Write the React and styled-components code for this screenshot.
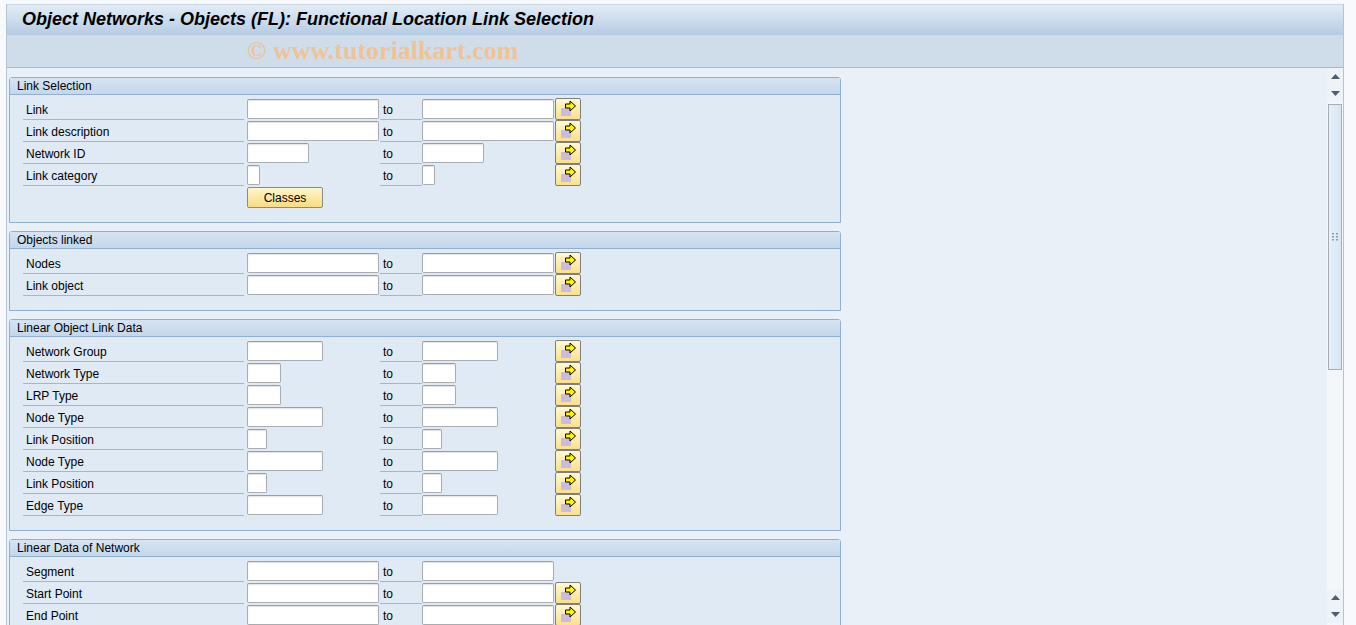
import React from 'react';
import styled, { createGlobalStyle } from 'styled-components';

const GlobalStyle = createGlobalStyle`
  html, body {
    margin: 0;
    padding: 0;
    background: #f7f9fc;
    font-family: "Liberation Sans", Arial, sans-serif;
    font-size: 12px;
    color: #000;
  }
`;

const Page = styled.div`
  width: 1356px;
  height: 625px;
  overflow: hidden;
  padding: 4px 12px 0 6px;
  box-sizing: border-box;
`;

const Frame = styled.div`
  display: flex;
  flex-direction: column;
  height: 100%;
  border-left: 1px solid #b4c4d4;
  border-right: 1px solid #b4c4d4;
`;

const TitleBar = styled.div`
  height: 31px;
  display: flex;
  align-items: center;
  padding: 0 0 2px 15px;
  border-top: 1px solid #c9d6e3;
  background: linear-gradient(#e3ecf6, #b6cce2);
  box-sizing: border-box;
`;

const Title = styled.h1`
  margin: 0;
  font-family: "Liberation Sans", Arial, sans-serif;
  font-size: 18px;
  font-weight: bold;
  font-style: italic;
  color: #000;
`;

const Toolbar = styled.div`
  height: 33px;
  display: flex;
  align-items: center;
  padding-left: 240px;
  background: #cfdce9;
  border-bottom: 1px solid #a5b7ca;
  box-sizing: border-box;
`;

const Watermark = styled.span`
  font-family: "Liberation Serif", "Times New Roman", serif;
  font-size: 26px;
  font-weight: bold;
  color: #f0c394;
`;

const Content = styled.div`
  flex: 1;
  display: flex;
  background: #e9f0f8;
  min-height: 0;
`;

const Main = styled.div`
  flex: 1;
  padding: 9px 0 0 2px;
  display: flex;
  flex-direction: column;
  gap: 8px;
`;

const Section = styled.section`
  width: 832px;
  flex-shrink: 0;
  border: 1px solid #91b0cf;
  border-radius: 3px 3px 0 0;
  background: #dfeaf5;
  box-sizing: border-box;
`;

const SectionHeader = styled.div`
  height: 17px;
  line-height: 16px;
  padding-left: 7px;
  background: linear-gradient(#d6e4f2, #c4d7eb);
  border-bottom: 1px solid #91b0cf;
  box-sizing: border-box;
`;

const SectionBody = styled.div`
  padding: 3px 0 14px 13px;
  display: flex;
  flex-direction: column;
`;

const Row = styled.div`
  display: grid;
  grid-template-columns: 224px 133px 42px 133px 26px;
  height: 22px;
  align-items: center;
`;

const Label = styled.div`
  height: 22px;
  line-height: 20px;
  padding: 2px 0 0 3px;
  margin-right: 3px;
  border-bottom: 1px solid #aab5c1;
  box-sizing: border-box;
`;

const ToLabel = styled(Label)`
  margin-right: 0;
`;

const Field = styled.div`
  width: ${(p) => p.$w}px;
  height: 20px;
  background: #fff;
  border: 1px solid #a9adb1;
  border-top-color: #9a9ea3;
  border-radius: 2px;
  box-sizing: border-box;
  box-shadow: inset 0 1px 1px #e3e3e3;
`;

const ArrowButton = styled.button`
  width: 26px;
  height: 22px;
  padding: 0;
  display: flex;
  align-items: center;
  justify-content: center;
  background: linear-gradient(#fff8d2, #f9e08c);
  border: 1px solid #7f7f7f;
  border-radius: 2px;
  box-sizing: border-box;
`;

const ButtonRow = styled.div`
  display: flex;
  padding: 1px 0 0 224px;
`;

const YellowButton = styled.button`
  width: 76px;
  height: 21px;
  padding: 0;
  font-family: "Liberation Sans", Arial, sans-serif;
  font-size: 12px;
  color: #000;
  background: linear-gradient(#fff6cc, #f9dc82);
  border: 1px solid #8a8a8a;
  border-radius: 2px;
`;

const Scrollbar = styled.div`
  width: 16px;
  display: flex;
  flex-direction: column;
  padding-bottom: 2px;
  background: #f4f7fa;
`;

const ScrollArrow = styled.div`
  height: 17px;
  display: flex;
  align-items: center;
  justify-content: center;
  background: #eef3f8;
`;

const Thumb = styled.div`
  height: 264px;
  margin: 2px 1px 0 1px;
  border: 1px solid #a3aeb9;
  background: linear-gradient(90deg, #e7f0f8, #d8e6f2);
  display: flex;
  align-items: center;
  justify-content: center;
`;

const Spacer = styled.div`
  flex: 1;
`;

function ArrowIcon() {
  return (
    <svg width="20" height="18" viewBox="0 0 20 18">
      <rect x="3" y="8" width="10" height="8" fill="#cbbbdc" />
      <path d="M7.5 4 H12 V1 L17.5 6 L12 11 V8 H7.5 Z" fill="#fff200" stroke="#000" strokeWidth="1" />
    </svg>
  );
}

function Triangle({ up }) {
  return (
    <svg width="9" height="5" viewBox="0 0 9 5">
      <path d={up ? 'M0 5 L4.5 0 L9 5 Z' : 'M0 0 L4.5 5 L9 0 Z'} fill="#4e5e6e" />
    </svg>
  );
}

function Grip() {
  return (
    <svg width="6" height="8" viewBox="0 0 6 8">
      {[0, 3, 6].map((y) => (
        <g key={y}>
          <rect x="0" y={y} width="2" height="1.5" fill="#8d9aa6" />
          <rect x="4" y={y} width="2" height="1.5" fill="#8d9aa6" />
        </g>
      ))}
    </svg>
  );
}

function SelRow({ label, w, btn = true }) {
  return (
    <Row>
      <Label>{label}</Label>
      <Field $w={w} />
      <ToLabel>to</ToLabel>
      <Field $w={w} />
      {btn ? (
        <ArrowButton>
          <ArrowIcon />
        </ArrowButton>
      ) : (
        <span />
      )}
    </Row>
  );
}

const sections = [
  {
    title: 'Link Selection',
    rows: [
      { label: 'Link', w: 132 },
      { label: 'Link description', w: 132 },
      { label: 'Network ID', w: 62 },
      { label: 'Link category', w: 13 },
    ],
    classes: true,
  },
  {
    title: 'Objects linked',
    rows: [
      { label: 'Nodes', w: 132 },
      { label: 'Link object', w: 132 },
    ],
  },
  {
    title: 'Linear Object Link Data',
    rows: [
      { label: 'Network Group', w: 76 },
      { label: 'Network Type', w: 34 },
      { label: 'LRP Type', w: 34 },
      { label: 'Node Type', w: 76 },
      { label: 'Link Position', w: 20 },
      { label: 'Node Type', w: 76 },
      { label: 'Link Position', w: 20 },
      { label: 'Edge Type', w: 76 },
    ],
  },
  {
    title: 'Linear Data of Network',
    rows: [
      { label: 'Segment', w: 132, btn: false },
      { label: 'Start Point', w: 132 },
      { label: 'End Point', w: 132 },
    ],
  },
];

export default function App() {
  return (
    <Page>
      <GlobalStyle />
      <Frame>
        <TitleBar>
          <Title>Object Networks - Objects (FL): Functional Location Link Selection</Title>
        </TitleBar>
        <Toolbar>
          <Watermark>© www.tutorialkart.com</Watermark>
        </Toolbar>
        <Content>
          <Main>
            {sections.map((s) => (
              <Section key={s.title}>
                <SectionHeader>{s.title}</SectionHeader>
                <SectionBody>
                  {s.rows.map((r, i) => (
                    <SelRow key={i} label={r.label} w={r.w} btn={r.btn !== false} />
                  ))}
                  {s.classes && (
                    <ButtonRow>
                      <YellowButton>Classes</YellowButton>
                    </ButtonRow>
                  )}
                </SectionBody>
              </Section>
            ))}
          </Main>
          <Scrollbar>
            <ScrollArrow>
              <Triangle up />
            </ScrollArrow>
            <ScrollArrow>
              <Triangle />
            </ScrollArrow>
            <Thumb>
              <Grip />
            </Thumb>
            <Spacer />
            <ScrollArrow>
              <Triangle up />
            </ScrollArrow>
            <ScrollArrow>
              <Triangle />
            </ScrollArrow>
          </Scrollbar>
        </Content>
      </Frame>
    </Page>
  );
}
